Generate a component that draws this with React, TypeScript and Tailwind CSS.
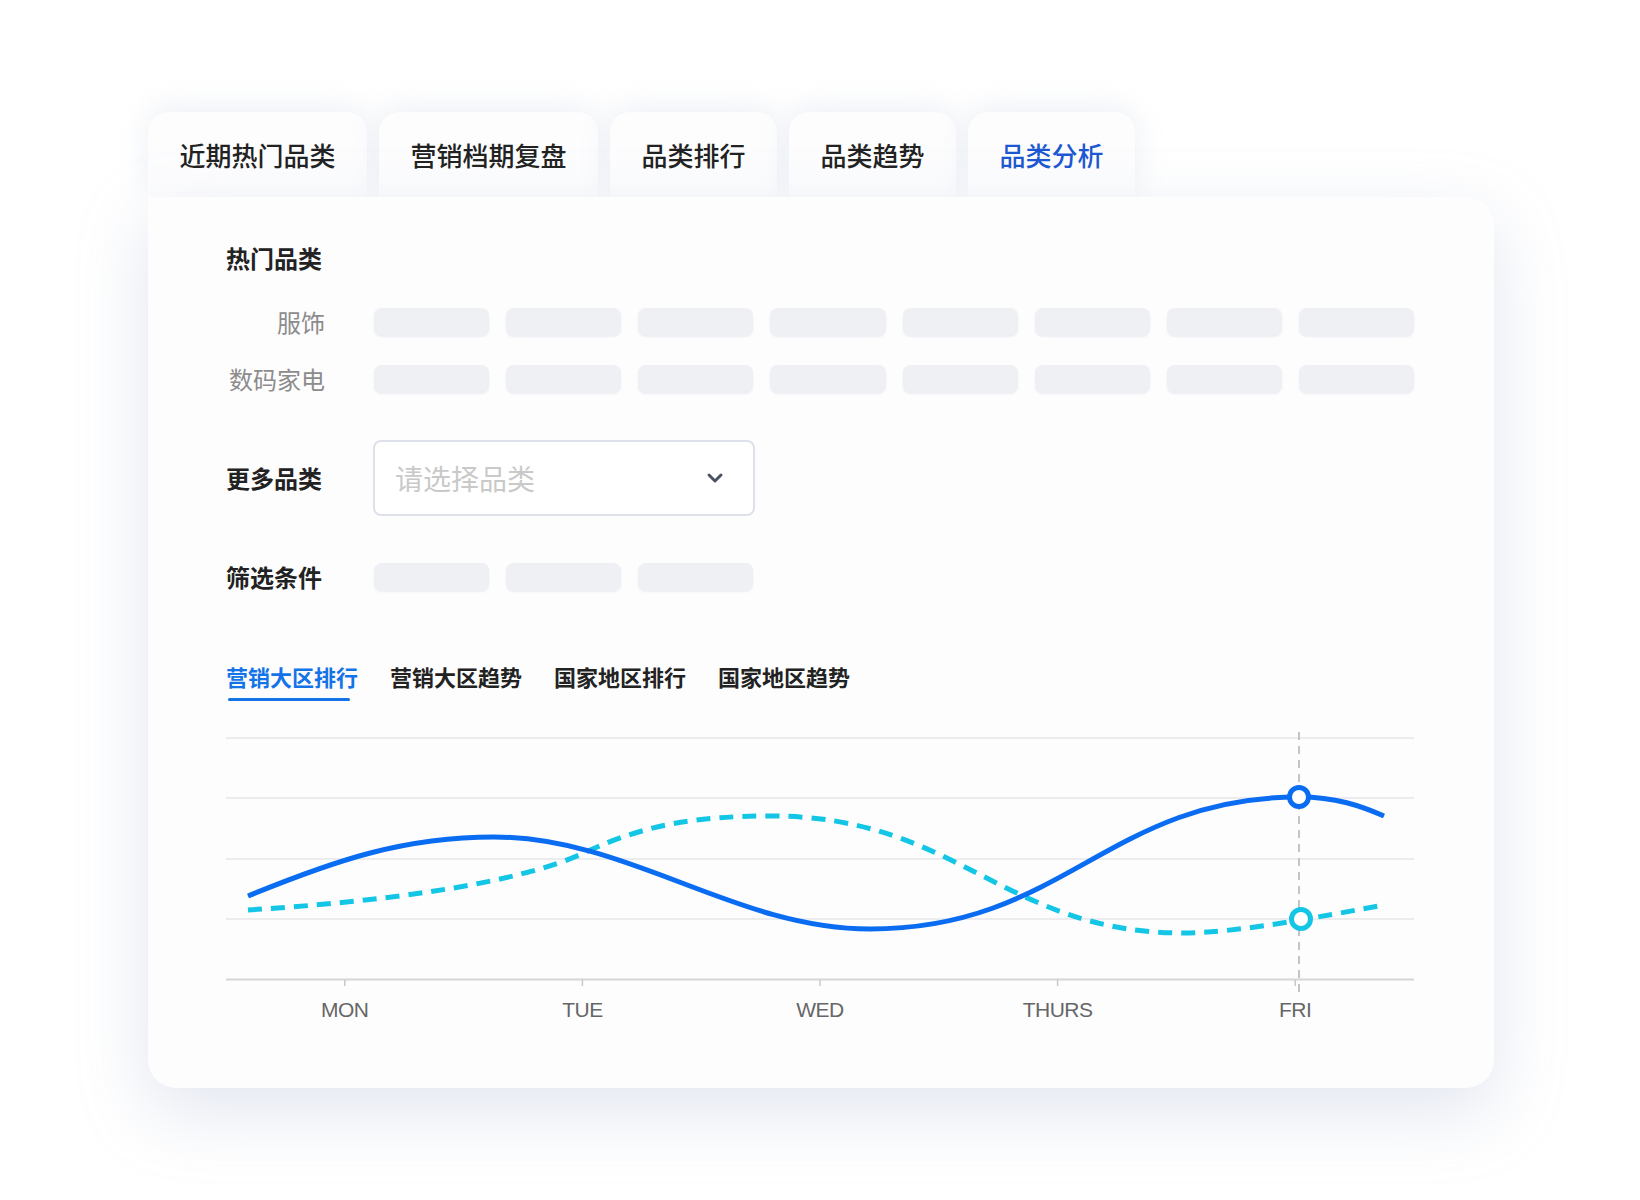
import React from "react";

const tabs = ["近期热门品类", "营销档期复盘", "品类排行", "品类趋势", "品类分析"];
const subTabs = ["营销大区排行", "营销大区趋势", "国家地区排行", "国家地区趋势"];
const days = ["MON", "TUE", "WED", "THURS", "FRI"];

const solidPath =
  "M22,178 C110,142 178,119 268,119 C403,119 509,211 644,211 C838,211 882,79 1073,79 C1110,79 1135,88 1158,98";
const cyanPath =
  "M22,192 C150,184 290,167 360,134 C420,106 473,98 545,98 C732,98 777,215 958,215 C1012,215 1102,197 1153,188";

function Pill() {
  return <div className="h-[28px] rounded-[8px] bg-[#eef0f4] shadow-[0_1px_2px_rgba(200,205,215,0.35)]" />;
}

export default function App() {
  const cjk = { fontFamily: '"Noto Sans CJK SC", "Noto Sans", sans-serif' };
  return (
    <div className="w-[1640px] h-[1200px] bg-white pl-[148px] pt-[112px]" style={cjk}>
      <div className="flex gap-[12px]">
        {tabs.map((t, i) => (
          <div
            key={t}
            className={`h-[85px] px-[31.5px] flex items-center rounded-t-[20px] bg-[#fdfdfe] shadow-[0_-4px_28px_rgba(170,182,210,0.22)] text-[26px] font-medium ${
              i === 4 ? "text-[#1d58d2]" : "text-[#222222]"
            }`}
          >
            {t}
          </div>
        ))}
      </div>
      <div className="relative z-10 w-[1346px] h-[891px] bg-[#fdfdfe] rounded-tr-[28px] rounded-b-[28px] shadow-[0_24px_70px_rgba(150,165,200,0.28)] pt-[45px] pl-[78px] pr-[80px]">
        <div className="h-[32px] leading-[32px] text-[24px] font-bold text-[#222222]">热门品类</div>

        <div className="mt-[34px] flex items-center h-[28px]">
          <div className="w-[148px] pr-[49px] text-right text-[24px] text-[#8c8c8c] leading-[28px]">服饰</div>
          <div className="flex-1 grid grid-cols-8 gap-[17px]">
            {Array.from({ length: 8 }).map((_, i) => (
              <Pill key={i} />
            ))}
          </div>
        </div>
        <div className="mt-[29px] flex items-center h-[28px]">
          <div className="w-[148px] pr-[49px] text-right text-[24px] text-[#8c8c8c] leading-[28px]">数码家电</div>
          <div className="flex-1 grid grid-cols-8 gap-[17px]">
            {Array.from({ length: 8 }).map((_, i) => (
              <Pill key={i} />
            ))}
          </div>
        </div>

        <div className="mt-[47px] flex items-center h-[76px]">
          <div className="w-[147px] text-[24px] font-bold text-[#222222]">更多品类</div>
          <div className="w-[382px] h-[76px] rounded-[8px] border-2 border-[#dfe1ea] bg-white flex items-center justify-between pl-[20px] pr-[28px]">
            <span className="text-[28px] text-[#c9c9c9]">请选择品类</span>
            <svg width="20" height="20" viewBox="0 0 20 20">
              <path d="M4 7 L10 13 L16 7" fill="none" stroke="#4b5263" strokeWidth="3" strokeLinecap="round" strokeLinejoin="round" />
            </svg>
          </div>
        </div>

        <div className="mt-[47px] flex items-center h-[28px]">
          <div className="w-[148px] text-[24px] font-bold text-[#222222]">筛选条件</div>
          <div className="flex-1 grid grid-cols-8 gap-[17px]">
            {Array.from({ length: 3 }).map((_, i) => (
              <Pill key={i} />
            ))}
          </div>
        </div>

        <div className="mt-[70px] flex gap-[32px]">
          {subTabs.map((t, i) => (
            <div key={t} className="flex flex-col">
              <div className={`h-[30px] leading-[30px] text-[22px] font-bold ${i === 0 ? "text-[#1473e6]" : "text-[#222222]"}`}>{t}</div>
              <div className={`mt-[7px] ml-[2px] w-[122px] h-[3px] rounded-full ${i === 0 ? "bg-[#1473e6]" : "bg-transparent"}`} />
            </div>
          ))}
        </div>

        <div className="mt-[17px]">
          <svg width="1188" height="280" viewBox="0 0 1188 280" className="block">
            {[20, 80, 141, 201].map((y) => (
              <line key={y} x1="0" x2="1188" y1={y} y2={y} stroke="#ececee" strokeWidth="2" />
            ))}
            <line x1="0" x2="1188" y1="261.5" y2="261.5" stroke="#d6d6d8" strokeWidth="2" />
            {[0, 1, 2, 3, 4].map((i) => (
              <line key={i} x1={118.8 + 237.6 * i} x2={118.8 + 237.6 * i} y1="262" y2="268" stroke="#c8c8c8" strokeWidth="1.5" />
            ))}
            <line x1="1073" x2="1073" y1="14" y2="280" stroke="#c4c4c4" strokeWidth="2" strokeDasharray="8 6" />
            <path d={cyanPath} fill="none" stroke="#14c6e6" strokeWidth="5" strokeDasharray="14 9" />
            <path d={solidPath} fill="none" stroke="#0a6cf0" strokeWidth="5" />
            <circle cx="1073" cy="79" r="9.5" fill="white" stroke="#0a6cf0" strokeWidth="5" />
            <circle cx="1075" cy="201" r="9.5" fill="white" stroke="#14c6e6" strokeWidth="5" />
          </svg>
          <div className="grid grid-cols-5 -mt-[1px]">
            {days.map((d) => (
              <div
                key={d}
                className="text-center h-[26px] leading-[26px] text-[21px] text-[#666666] tracking-[-0.5px]"
                style={{ fontFamily: '"Liberation Sans", Arial, sans-serif' }}
              >
                {d}
              </div>
            ))}
          </div>
        </div>
      </div>
    </div>
  );
}
